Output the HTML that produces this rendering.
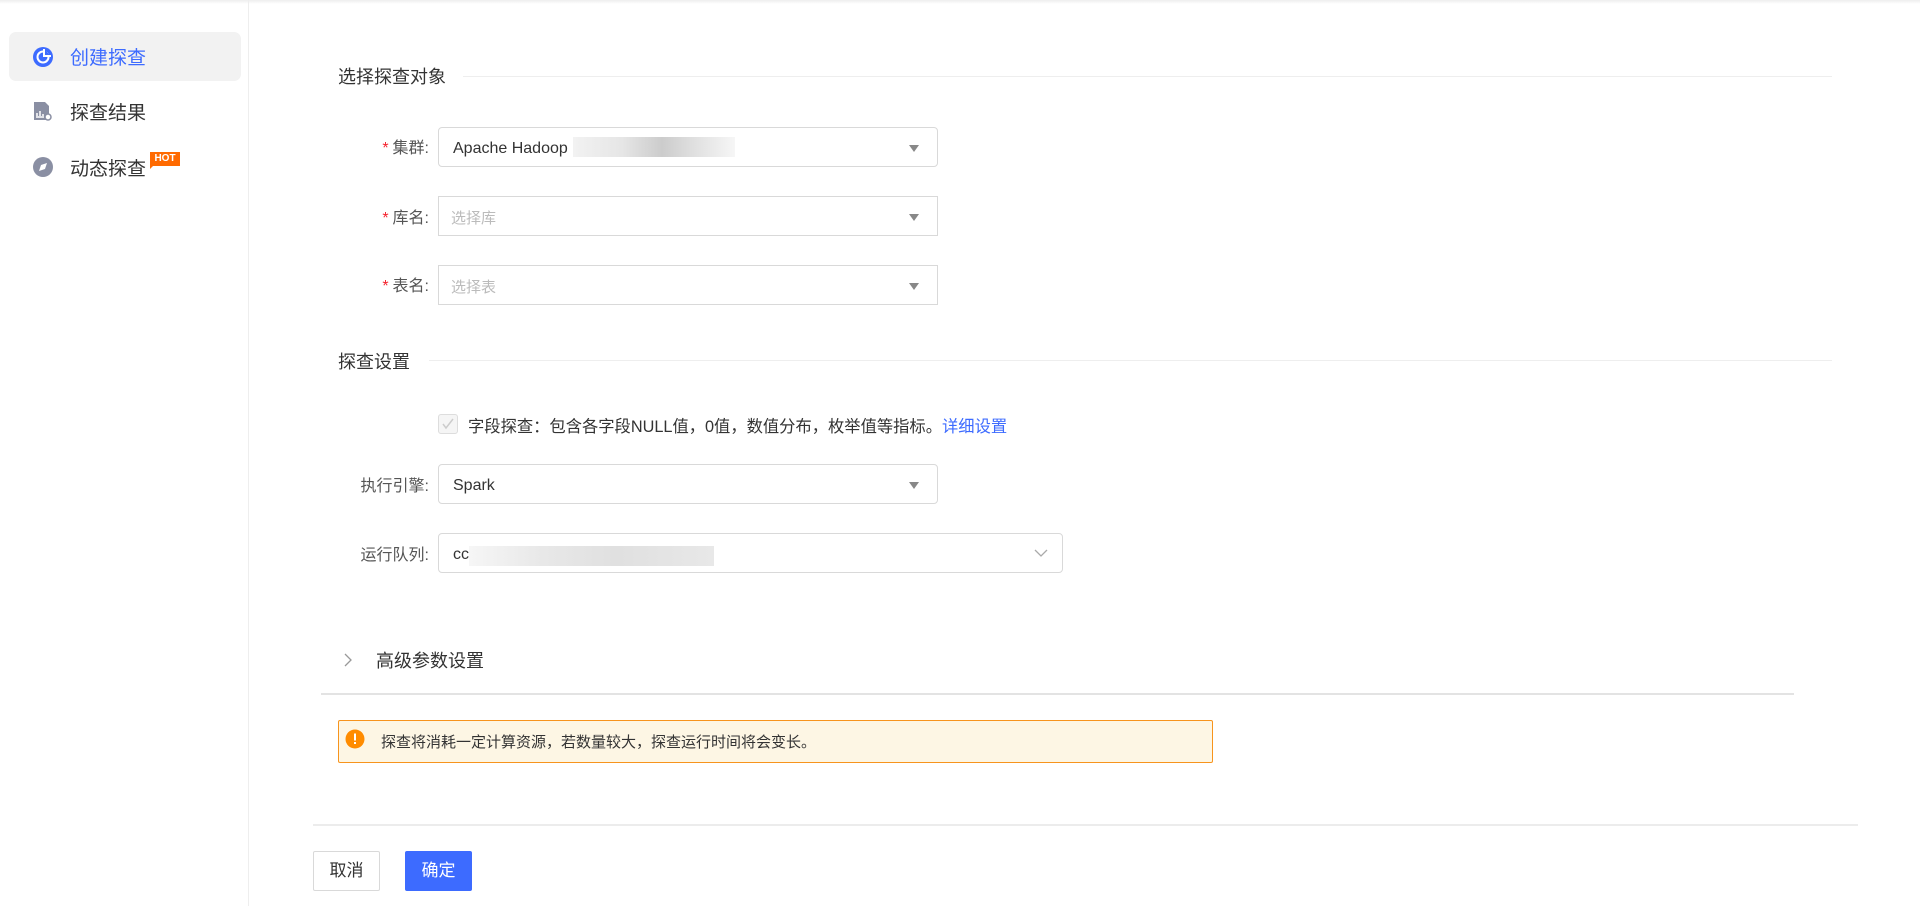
<!DOCTYPE html>
<html><head><meta charset="utf-8"><style>
*{box-sizing:border-box;margin:0;padding:0}
body{width:1920px;height:906px;background:#fff;font-family:"Liberation Sans","Noto Sans CJK SC",sans-serif;color:#333;position:relative;overflow:hidden}
.a{position:absolute}
.topsh{left:0;top:0;width:1920px;height:4px;background:linear-gradient(#eee,#fff)}
.side{left:0;top:0;width:249px;height:906px;border-right:1px solid #eee}
.item{left:9px;width:232px;height:49px;border-radius:7px;font-size:19px;display:flex;align-items:center;padding-left:61px;color:#333}
.sec{font-size:18px;color:#333}
.line{height:1px;background:#eee}
.lbl{font-size:16px;color:#555;text-align:right;width:120px}
.lbl b{color:#f5222d;font-weight:normal;margin-right:4px}
.sel{border:1px solid #d9d9d9;border-radius:4px;height:40px;font-size:16px;display:flex;align-items:center;padding-left:14px;padding-top:3px;color:#333}
.sel.sq{border-radius:0}
.ph{color:#bbb;font-size:15px;padding-left:12px}
.tri{position:absolute;right:18px;top:17px;width:0;height:0;border-left:5px solid transparent;border-right:5px solid transparent;border-top:7px solid #888}
.blur{position:absolute;height:20px;background:linear-gradient(90deg,#f2f2f2,#e6e6e6 30%,#ccc 55%,#e0e0e0 75%,#f6f6f6)}
</style></head><body>
<div class="a topsh"></div>
<div class="a side"></div>
<div class="a item" style="top:32px;background:#f2f2f2;color:#3d6bff">创建探查</div>
<svg class="a" style="left:32px;top:46px" width="22" height="22" viewBox="0 0 22 22"><circle cx="11" cy="11" r="10" fill="#3d6bff"/><circle cx="11" cy="11" r="5.5" fill="none" stroke="#fff" stroke-width="2"/><path d="M12 3v7h7" fill="#3d6bff" stroke="#fff" stroke-width="2"/></svg>
<div class="a item" style="top:87px">探查结果</div>
<svg class="a" style="left:33px;top:101px" width="20" height="21" viewBox="0 0 20 21"><path d="M1 1h11l4 4v14H1z" fill="#8a8fa3"/><path d="M4 15v-3M7 15v-5M10 15v-2M3 16h8" stroke="#fff" stroke-width="1.5"/><circle cx="15" cy="16" r="3" fill="#fff" stroke="#8a8fa3" stroke-width="1.5"/></svg>
<div class="a item" style="top:143px">动态探查</div>
<svg class="a" style="left:32px;top:156px" width="22" height="22" viewBox="0 0 22 22"><circle cx="11" cy="11" r="10" fill="#8a8fa3"/><path d="M15 7l-2 6-6 2 2-6z" fill="#fff"/></svg>
<div class="a" style="left:150px;top:152px;width:30px;height:14px;background:#ff6a00;color:#fff;font-size:10px;font-weight:bold;text-align:center;line-height:14px">HOT</div>
<div class="a" style="left:150px;top:165px;width:0;height:0;border-top:4px solid #ff6a00;border-right:4px solid transparent"></div>

<div class="a sec" style="left:338px;top:63px">选择探查对象</div>
<div class="a line" style="left:463px;top:76px;width:1369px"></div>

<div class="a lbl" style="left:309px;top:134px"><b>*</b>集群:</div>
<div class="a sel" style="left:438px;top:127px;width:500px">Apache Hadoop<div class="blur" style="left:134px;top:9px;width:162px"></div><div class="tri"></div></div>
<div class="a lbl" style="left:309px;top:204px"><b>*</b>库名:</div>
<div class="a sel sq" style="left:438px;top:196px;width:500px;padding-left:0"><span class="ph">选择库</span><div class="tri"></div></div>
<div class="a lbl" style="left:309px;top:272px"><b>*</b>表名:</div>
<div class="a sel sq" style="left:438px;top:265px;width:500px;padding-left:0"><span class="ph">选择表</span><div class="tri"></div></div>

<div class="a sec" style="left:338px;top:348px">探查设置</div>
<div class="a line" style="left:429px;top:360px;width:1403px"></div>

<div class="a" style="left:438px;top:414px;width:20px;height:20px;border:1px solid #ddd;background:#f5f5f5;border-radius:3px"><svg width="18" height="18" viewBox="0 0 18 18"><path d="M4 9l3 4 7-9" fill="none" stroke="#ccc" stroke-width="1.5"/></svg></div>
<div class="a" style="left:468px;top:413px;font-size:16.3px;color:#333">字段探查：包含各字段NULL值，0值，数值分布，枚举值等指标。<span style="color:#3d6bff">详细设置</span></div>

<div class="a lbl" style="left:309px;top:472px">执行引擎:</div>
<div class="a sel" style="left:438px;top:464px;width:500px">Spark<div class="tri"></div></div>
<div class="a lbl" style="left:309px;top:541px">运行队列:</div>
<div class="a sel" style="left:438px;top:533px;width:625px">cc<div class="blur" style="left:30px;top:12px;width:245px;background:linear-gradient(90deg,#f6f6f6,#e8e8e8 30%,#e0e0e0 60%,#e8e8e8)"></div><svg style="position:absolute;right:14px;top:14px" width="14" height="10" viewBox="0 0 14 10"><path d="M1 2l6 6 6-6" fill="none" stroke="#aaa" stroke-width="1.3"/></svg></div>

<svg class="a" style="left:343px;top:652px" width="10" height="16" viewBox="0 0 10 16"><path d="M2 2l6 6-6 6" fill="none" stroke="#999" stroke-width="1.3"/></svg>
<div class="a" style="left:376px;top:647px;font-size:18px;color:#333">高级参数设置</div>
<div class="a" style="left:321px;top:693px;width:1473px;height:2px;background:#e3e3e3"></div>

<div class="a" style="left:338px;top:720px;width:875px;height:43px;border:1px solid #f7941d;background:#fdf6e4;border-radius:2px"></div>
<svg class="a" style="left:345px;top:729px" width="20" height="20" viewBox="0 0 20 20"><circle cx="10" cy="10" r="9.5" fill="#ff8c00"/><rect x="9" y="4.5" width="2" height="7" fill="#fff"/><rect x="9" y="13" width="2" height="2" fill="#fff"/></svg>
<div class="a" style="left:381px;top:731px;font-size:15px;color:#333">探查将消耗一定计算资源，若数量较大，探查运行时间将会变长。</div>

<div class="a" style="left:313px;top:824px;width:1545px;height:2px;background:#ececec"></div>
<div class="a" style="left:313px;top:851px;width:67px;height:40px;border:1px solid #d9d9d9;border-radius:2px;font-size:17px;text-align:center;line-height:38px;color:#333">取消</div>
<div class="a" style="left:405px;top:851px;width:67px;height:40px;background:#3d6bff;border-radius:2px;font-size:17px;text-align:center;line-height:40px;color:#fff">确定</div>
</body></html>
